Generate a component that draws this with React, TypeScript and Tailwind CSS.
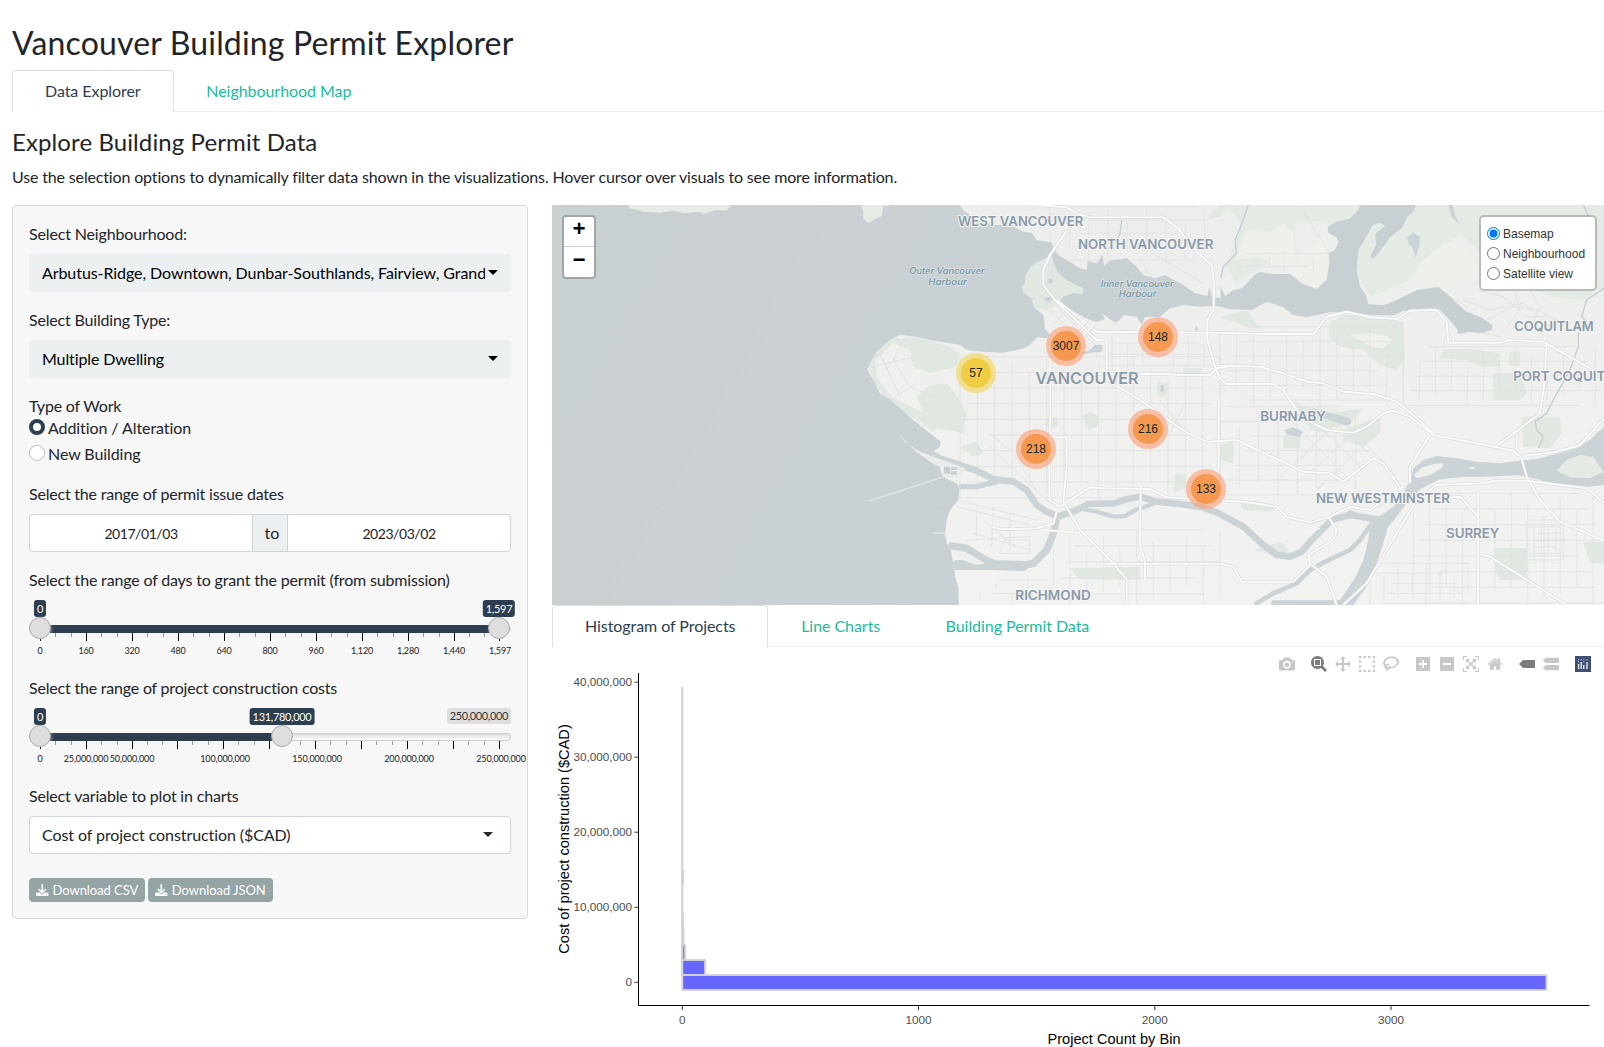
import React from "react";
import { FaDownload } from "react-icons/fa6";

const lato = "font-['Lato',sans-serif]";

function Caret({ className = "" }: { className?: string }) {
  return (
    <span
      className={`h-0 w-0 shrink-0 border-x-[5px] border-t-[5px] border-x-transparent border-t-current ${className}`}
    />
  );
}

function Tabs({ items }: { items: string[] }) {
  return (
    <div className="flex h-[42px] border-b border-[#ecf0f1]">
      {items.map((t, i) => (
        <div
          key={t}
          className={
            i === 0
              ? "h-[42px] rounded-t border border-b-0 border-[#dee2e6] bg-white px-8 py-2 leading-6 tracking-[-0.06px] text-[#2c3e50]"
              : "h-[42px] px-[32.7px] py-[9px] leading-6 tracking-[-0.05px] text-[#18bc9c]"
          }
        >
          {t}
        </div>
      ))}
    </div>
  );
}

function Bubble({ x, children, muted = false }: { x: number; children: React.ReactNode; muted?: boolean }) {
  return (
    <span
      className={
        muted
          ? "absolute top-0 right-0 h-4 rounded-[3px] bg-[#dedede] px-[3px] text-[11px] leading-[15px] tracking-[-0.37px] text-[#333]"
          : "absolute top-0 h-[17px] -translate-x-1/2 rounded-[3px] bg-[#2c3e50] px-[3px] text-[11px] leading-[17px] tracking-[-0.33px] text-white"
      }
      style={muted ? undefined : { left: x }}
    >
      {children}
    </span>
  );
}

function Handle({ x }: { x: number }) {
  return (
    <span
      className="absolute top-[17px] h-[22px] w-[22px] -translate-x-1/2 rounded-full border border-[#ababab] bg-[#dedede] shadow-[1px_1px_3px_rgba(255,255,255,0.3)]"
      style={{ left: x }}
    />
  );
}

type SliderProps = {
  to: number;
  toLabel: string;
  maxLabel?: string;
  majors: number[];
  labels: [number, string][];
};

function Slider({ to, toLabel, maxLabel, majors, labels }: SliderProps) {
  const minors: number[] = [];
  majors.slice(0, -1).forEach((m, i) => {
    const d = (majors[i + 1] - m) / 3;
    minors.push(m + d, m + 2 * d);
  });
  return (
    <div className="relative mt-2 mb-4 h-[60px]">
      <div className="absolute top-[25px] h-2 w-full rounded-lg border border-[#ccc] bg-gradient-to-b from-[#dedede] to-white" />
      <div className="absolute top-[25px] left-[11px] h-2 bg-[#2c3e50]" style={{ width: to - 11 }} />
      {minors.map((m) => (
        <span key={m} className="absolute top-[33px] h-1 w-px bg-[#999]" style={{ left: Math.round(m) }} />
      ))}
      {majors.map((m) => (
        <span key={m} className="absolute top-[33px] h-2 w-px bg-black" style={{ left: Math.round(m) }} />
      ))}
      {labels.map(([x, t]) => (
        <span
          key={t}
          className="absolute top-[44px] -translate-x-1/2 text-[9px] leading-[13px] tracking-[-0.14px] whitespace-nowrap text-[#222]"
          style={{ left: x }}
        >
          {t}
        </span>
      ))}
      {maxLabel && <Bubble x={0} muted>{maxLabel}</Bubble>}
      <Bubble x={11}>0</Bubble>
      <Bubble x={to}>{toLabel}</Bubble>
      <Handle x={11} />
      <Handle x={to} />
    </div>
  );
}

const dayMajors = [11, 57, 103, 149, 195, 241, 287, 333, 379, 425, 470];
const costMajors = [11, 57, 103, 148, 194, 240, 286, 332, 378, 424, 470];

function Sidebar() {
  return (
    <div className="h-[714px] w-[516px] shrink-0 rounded border border-[#d8d9da] bg-[#f7f7f7] p-4">
      <div className="leading-6 tracking-[-0.15px]">Select Neighbourhood:</div>
      <div className="mt-2 flex h-[38px] items-center rounded bg-[#ecf0f1] px-[13px] text-black">
        <span className="w-[443px] shrink-0 overflow-hidden tracking-[-0.07px] whitespace-nowrap">
          Arbutus-Ridge, Downtown, Dunbar-Southlands, Fairview, Grandview-Woodland
        </span>
        <Caret className="mb-0.5 ml-[3px]" />
      </div>
      <div className="mt-4 leading-6 tracking-[-0.18px]">Select Building Type:</div>
      <div className="mt-2 flex h-[38px] items-center rounded bg-[#ecf0f1] px-[13px] text-black">
        <span className="w-[443px] shrink-0 tracking-[-0.12px]">Multiple Dwelling</span>
        <Caret className="mb-0.5 ml-[3px]" />
      </div>
      <div className="mt-4 leading-6 tracking-[-0.2px]">Type of Work</div>
      <div className="-mt-0.5 flex h-[22px] items-center gap-[3px] pt-px">
        <span className="mb-px h-4 w-4 rounded-full border-[4.5px] border-[#2c3e50] bg-white" />
        <span className="leading-5 tracking-[-0.08px]">Addition / Alteration</span>
      </div>
      <div className="mt-1 mb-[18px] flex h-[22px] items-center gap-[3px] pt-px">
        <span className="mb-px h-4 w-4 rounded-full border border-[#bfbfbf] bg-white" />
        <span className="leading-5 tracking-[-0.08px]">New Building</span>
      </div>
      <div className="leading-6 tracking-[-0.21px]">Select the range of permit issue dates</div>
      <div className="mt-2 flex h-[38px] rounded border border-[#ced4da] bg-white text-[14px]">
        <div className="flex flex-1 items-center justify-center pt-px tracking-[-0.45px]">2017/01/03</div>
        <div className="flex w-9 items-center justify-center border-x border-[#ced4da] bg-[#ecf0f1] pl-1 text-base">to</div>
        <div className="flex flex-1 items-center justify-center pt-px tracking-[-0.45px]">2023/03/02</div>
      </div>
      <div className="mt-4 leading-6 tracking-[-0.17px]">Select the range of days to grant the permit (from submission)</div>
      <Slider
        to={470}
        toLabel="1,597"
        majors={dayMajors}
        labels={["0", "160", "320", "480", "640", "800", "960", "1,120", "1,280", "1,440", "1,597"].map(
          (t, i) => [dayMajors[i] + (i === 10 ? 1 : 0), t] as [number, string],
        )}
      />
      <div className="leading-6 tracking-[-0.2px]">Select the range of project construction costs</div>
      <Slider
        to={253}
        toLabel="131,780,000"
        maxLabel="250,000,000"
        majors={costMajors}
        labels={[
          [11, "0"],
          [57, "25,000,000"],
          [103, "50,000,000"],
          [196, "100,000,000"],
          [288, "150,000,000"],
          [380, "200,000,000"],
          [472, "250,000,000"],
        ]}
      />
      <div className="leading-6 tracking-[-0.18px]">Select variable to plot in charts</div>
      <div className="mt-2 flex h-[38px] items-center justify-between rounded border border-[#ced4da] bg-white pr-[17px] pl-3">
        <span className="tracking-[-0.08px]">Cost of project construction ($CAD)</span>
        <Caret className="mb-0.5" />
      </div>
      <div className="mt-6 flex gap-[3px] text-[13px] leading-6 text-white">
        {["Download CSV", "Download JSON"].map((t) => (
          <div key={t} className="flex h-6 items-center gap-1 rounded bg-[#95a5a6] px-[7px]">
            <FaDownload className="h-[12.5px] w-[12.5px]" />
            <span className="-mt-px tracking-[-0.05px]">{t}</span>
          </div>
        ))}
      </div>
    </div>
  );
}

/* Street grids: [x0, y0, x1, y1, horizontal step, vertical step] in map units */
const grids: [number, number, number, number, number, number][] = [
  [330, 470, 1110, 900, 52, 47],
  [740, 395, 1110, 520, 46, 34],
  [1110, 380, 1660, 620, 50, 44],
  [1110, 620, 1560, 900, 58, 44],
  [1660, 440, 2262, 620, 48, 44],
  [610, 990, 1110, 1215, 50, 48],
  [390, 1140, 620, 1215, 48, 40],
  [1690, 880, 2262, 1215, 49, 47],
  [1560, 1090, 1860, 1215, 42, 30],
  [2030, 960, 2150, 1080, 22, 20],
  [600, 20, 1070, 190, 58, 40],
  [1170, 160, 1440, 215, 44, 40],
];

function gridPath() {
  let d = "";
  grids.forEach(([x0, y0, x1, y1, sx, sy], g) => {
    let k = g * 7;
    for (let x = x0; x <= x1; x += sx) {
      const a = ((k * 37) % 5) * sy * 0.35;
      const b = ((k * 53) % 4) * sy * 0.4;
      d += `M${x} ${y0 + a}V${y1 - b}`;
      k++;
    }
    for (let y = y0; y <= y1; y += sy) {
      const a = ((k * 29) % 5) * sx * 0.4;
      const b = ((k * 43) % 4) * sx * 0.5;
      d += `M${x0 + a} ${y}H${x1 - b}`;
      k++;
    }
  });
  return d;
}

const roads = [
  "M560 15L650 22L680 40L720 52L940 52L985 85L1010 120L1045 160L1085 195L1093 260L1090 330L1072 360L1072 420L1095 500L1110 535L1130 552L1270 552L1300 570L1345 640",
  "M1318 600L1360 655L1430 690L1510 698L1550 680L1600 640L1630 632L1680 650L1750 705L1880 730L1990 752L2015 775L2030 830L2070 900L2130 965L2262 1022",
  "M1110 497L1230 500L1300 520L1370 545L1420 550L1480 575L1570 582L1640 605L1690 645L1750 700",
  "M648 95L600 165L580 210L580 255L615 300L740 420L760 420",
  "M620 300L740 395L1110 398L1240 402L1390 402L1430 350L1490 335L1560 352L1640 357L1680 332L1760 330L1790 365L1795 428L1955 428L1975 420L2080 425L2220 505",
  "M2090 430L2082 560L2070 640L1940 738",
  "M601 480V710M598 710V900L630 920L720 862L760 865L900 867L950 892L1180 905L1280 920L1310 950L1380 968L1440 950L1500 920L1560 930L1660 860",
  "M650 712V800L640 905L690 990L790 1090L830 1140V1215",
  "M600 712H650",
  "M872 858L870 1030L885 1085V1140",
  "M760 1091H1110L1150 1100L1175 1145L1330 1145L1380 1095L1375 1065L1450 1020L1460 990L1435 950",
  "M1385 1095L1430 1130L1460 1215",
  "M1480 1215L1550 1150L1700 900L1760 855L1900 850L1930 842L2030 842L2210 865L2262 910",
  "M770 420V540L870 600L1010 698L1070 725L1160 720L1360 815L1440 820L1480 845L1570 775L1600 790L1655 870",
  "M710 523L960 522M980 525L1080 524L1100 505L1140 498M1106 600V810",
  "M425 980L450 988L560 985L610 970L620 935M580 990L690 998",
  "M1885 870L1884 1215M1900 1065L1920 1070L2150 1215M1800 892L1830 890L1885 950",
  "M1740 705L1680 800L1680 850M2000 690L2000 745M2262 655L2190 735L2120 755L2020 768",
];

function MapLabel({
  x, y, w, size = 39, children,
}: { x: number; y: number; w: number; size?: number; children: string }) {
  return (
    <text
      x={x}
      y={y}
      textLength={w}
      lengthAdjust="spacingAndGlyphs"
      fontSize={size}
      fontWeight={600}
      fill="#8b9aa9"
      stroke="#f3f4f3"
      strokeWidth={6}
      strokeLinejoin="round"
      paintOrder="stroke"
      fontFamily="Inter, 'Open Sans', sans-serif"
    >
      {children}
    </text>
  );
}

function MapDrawing() {
  const water = "#ccd3d6";
  const park = "#e0e8e1";
  return (
    <svg className="block h-full w-full" viewBox="552 205 1052 400" preserveAspectRatio="xMidYMid slice">
      <defs>
        <linearGradient id="sea" x1="0" y1="0" x2="1" y2="0.25">
          <stop offset="0" stopColor="#c8d1d3" />
          <stop offset="0.25" stopColor="#cacfd2" />
          <stop offset="0.4" stopColor="#cad1d4" />
          <stop offset="1" stopColor="#c8cfd3" />
        </linearGradient>
        <linearGradient id="land" x1="0" y1="0" x2="0" y2="1">
          <stop offset="0" stopColor="#eceeeb" />
          <stop offset="0.4" stopColor="#eff0ed" />
          <stop offset="1" stopColor="#f2f3f0" />
        </linearGradient>
      </defs>
      <g transform="translate(850 200) scale(0.33333)">
        <rect x={-900} y={0} width={3200} height={1230} fill="url(#land)" />
        {/* mountains and parks */}
        <path fill="#e4eae4" d="M1120 15H2262V260L2200 300L2100 290L1980 240L1900 170L1830 100L1720 190L1660 250L1560 290L1500 180L1430 60L1330 70L1340 160L1250 190L1160 250L1130 200L1180 70Z" />
        <path fill="#eff0ec" d="M1190 90L1260 95L1300 70L1330 100L1340 180L1440 100L1430 230L1400 262L1340 225L1280 195L1220 170L1150 180Z" />
        <path fill="#eff0ec" d="M1780 130L1830 120L1860 160L1890 195L1860 230L1800 260L1720 260L1690 240L1710 190Z" />
        <path fill={park} d="M1440 370L1480 345L1560 350L1660 365L1665 480L1640 510L1590 495L1540 450L1470 440L1435 410Z" />
        <path fill="#f0f1ed" d="M1500 405L1560 400L1600 405L1630 420L1600 445L1560 440L1540 425Z" />
        <path fill={park} d="M110 420L200 410L300 440L330 460L320 500L240 520L190 500L180 450Z" />
        <path fill={park} d="M55 500L75 460L120 420L150 410L75 480L80 530L125 590L220 640L260 700L200 660L120 615L70 540Z" />
        <path fill={park} d="M200 590L240 555L290 550L330 600L350 640L340 700L300 690L220 680L215 620Z" />
        <path fill={park} d="M1930 520L2010 520L2030 580L2010 600L1930 600ZM1980 455L2010 455V500L1975 495ZM1780 450L1850 445L1950 460V500L1900 500L1850 480L1770 475Z" />
        <path fill={park} d="M2015 650L2130 650L2135 700L2100 745L2020 740ZM1935 1045L2030 1045V1140L1950 1140L1935 1110ZM2200 1025H2262V1090L2220 1090Z" />
        <path fill={park} d="M1480 690L1590 650L1590 700L1540 740L1480 720ZM1360 615L1430 640L1540 625L1500 670L1430 685L1380 660ZM1110 735L1150 725L1150 790L1110 780ZM1300 710H1350V745H1300Z" />
        <path fill={park} d="M1110 350L1190 330L1220 370L1240 385L1200 385ZM660 1105L870 1100V1140L690 1138ZM1330 600L1390 640L1430 700L1380 690ZM1210 1050L1290 1025L1320 1050L1290 1070Z" />
        <path fill={park} d="M695 650L720 635L750 650L740 680L715 690ZM975 820L1005 825L1010 860L970 880ZM590 650L625 655L620 680L585 680ZM1000 505H1060L1050 530H1000ZM920 545L955 550L950 590H925Z" />
        <path fill={park} d="M1070 60L1110 50L1140 15H1110L1080 45ZM330 740L380 725L400 760L370 770ZM1170 910L1280 922L1270 935L1180 930Z" />

        <path d={gridPath()} fill="none" stroke="#e0e1e2" strokeWidth={2.4} />
        <path
          d="M1340 610L1540 810M1380 600L1600 800M1300 640L1500 840M1440 620L1640 830M1290 830L1500 630M1340 850L1560 660M1400 870L1600 680M1350 780L1470 660M90 460L150 590M160 420L130 480L180 560L250 590M70 500L190 470M120 600L200 550M930 600L1000 690M1000 620L960 700M870 180L910 240M840 120L1060 250M1180 15L1170 100L1130 200M1350 20L1440 160M1840 300L1920 330L2020 310L2100 380M1880 270L1960 290L2030 350L2090 350M1910 360L1990 320L2060 330L2140 370M1990 260L2010 330L1970 380M1800 290L1850 320L1900 400L1950 410M2040 270L2070 320L2050 370L2080 410M420 700L490 760L560 870M420 740L600 910"
          fill="none" stroke="#dedfe0" strokeWidth={2.4}
        />
        {/* airport */}
        <path
          d="M320 900L560 960M320 920L540 975M350 1020L540 1010M380 930V1010M430 920L425 1040M480 940V1050M400 960L500 1045M370 1000L540 1050M460 1020H540V1060H450Z"
          fill="none" stroke="#dddfdf" strokeWidth={2.4}
        />

        {/* sea and inlet */}
        <path
          fill="url(#sea)"
          d="M-900 0H315L345 35L380 60L430 75L480 75L520 95L545 98L560 120L605 128L612 148L625 165L650 180L690 205L710 210L713 183L740 190L758 165L762 198L780 182L830 175L860 200L880 225L915 235L945 225L1000 255L1035 280L1072 288L1078 262L1085 290L1112 295V258L1125 288L1150 270L1175 265L1200 240L1212 225L1230 216L1270 222L1320 222L1355 250L1400 267L1430 240L1438 190L1436 160L1455 150L1465 125L1460 112L1435 98L1433 80L1460 65L1500 55L1525 30L1535 0H1705L1690 35L1672 50L1655 85L1620 112L1600 140L1570 176L1560 172L1578 135L1577 100L1605 78L1590 68L1568 75L1555 100L1525 150L1520 210L1530 260L1548 285L1555 312L1600 316L1640 300L1680 280L1700 270L1765 261L1790 280L1820 310L1850 335L1890 350L1928 375L1925 390L1890 400L1860 395L1825 402L1820 385L1790 350L1770 330L1740 325L1660 332L1630 346L1560 345L1500 335L1440 337L1370 352L1330 345L1300 322L1250 305L1205 330L1140 328L1100 318L1050 320L1000 315L960 325L930 350L885 352L875 375L860 350L820 345L810 360L795 368L755 340L765 358L740 366L720 360L690 345L665 330L640 315L615 305L580 295L545 300L555 325L580 345L585 385L600 405L590 415L562 412L540 435L520 445L500 450L460 458L400 455L350 450L330 435L300 430L250 422L200 410L150 405L120 420L80 455L60 490L52 510L70 540L90 580L120 600L150 625L190 660L215 680L240 700L272 725L270 740L248 755L260 775L320 790L270 795L278 830L320 850L328 865L325 900L300 930L290 960L285 1000L290 1030L300 1040L312 1100L315 1130L325 1160L327 1230H-900Z"
        />
        <path fill={water} d="M690 460L720 450L735 435L758 435L755 455L725 458L705 462ZM1672 110L1690 98L1710 110L1708 140L1697 172L1688 145L1675 130ZM1795 15H1808L1815 45L1830 75L1805 50ZM1390 625L1500 655L1505 670L1490 678L1440 660L1400 645ZM1305 690L1330 682L1358 695L1350 710L1310 705ZM932 555H942V575H932ZM1035 380H1043V392H1035Z" />
        {/* distant islands */}
        <path fill="#e6ebe5" d="M-670 10L-660 25L-620 35L-570 38L-530 32L-500 40L-450 35L-440 42L-400 30L-370 32L-355 10ZM32 10L40 35L40 55L55 70L70 60L95 48L100 15ZM102 15L110 20L120 15Z" />
        {/* Stanley Park peninsula */}
        <path fill={park} d="M605 165L612 190L625 218L650 240L700 265L698 283L668 280L640 290L625 312L590 332L560 325L548 298L520 278L515 260L525 250L527 225L545 195L580 178Z" />
        <ellipse cx={602} cy={243} rx={7} ry={8} fill={water} />
        <path fill={water} d="M578 295L600 290L610 298L595 308Z" />

        {/* river arms */}
        <g fill="none" stroke={water} strokeLinejoin="round" strokeLinecap="round">
          <path strokeWidth={20} d="M235 755L270 775L330 795L380 812L430 838L490 845L530 870L560 915L590 935L625 950L680 930L715 912L790 910L830 898L870 890L920 905L990 912L1060 922L1110 942L1180 980L1240 1035L1280 1065L1320 1070L1355 1055L1385 1020L1420 985L1450 958L1500 945L1560 955L1600 960" />
          <path strokeWidth={13} d="M690 925L740 935L790 950L825 948L860 928L910 912" />
          <path strokeWidth={16} d="M335 860L380 860L440 845" />
          <path strokeWidth={22} d="M620 955L610 1000L590 1050L550 1090L500 1100L440 1095L390 1070L350 1045L305 1038" />
          <path strokeWidth={30} d="M320 1095L420 1095L520 1098" />
          <path strokeWidth={14} d="M1565 970L1530 1020L1500 1050L1420 1088L1380 1110L1340 1150L1270 1180L1220 1210M1270 1208H1470" />
          <path strokeWidth={9} d="M1470 955L1500 935L1540 950" />
        </g>
        <path
          fill={water}
          d="M2262 680L2220 720L2180 745L2140 755L2060 777L2000 783L1950 790L1880 785L1820 775L1760 768L1720 780L1690 805L1680 840L1660 880L1630 920L1580 955L1560 985L1553 1030L1540 1080L1515 1135L1460 1215H1510L1550 1160L1580 1090L1600 1030L1612 985L1640 950L1670 910L1710 868L1770 838L1830 832L1910 830L2010 826L2070 840L2150 858L2200 862L2262 855Z"
        />
        <path fill="#e5eae5" d="M2120 812L2150 780L2190 765L2230 770L2260 815L2220 835L2160 832Z" />
        <path fill="#f0f1ee" d="M1692 825L1715 803L1750 792L1780 790L1775 805L1740 825L1700 835ZM1850 803L1875 801L1870 808Z" />
        <path fill="#eff0ed" d="M705 922L790 922L850 905L885 905L840 930L790 940L740 925ZM308 1050L350 1058L405 1090L380 1095L330 1078Z" />
        {/* sand bars and jetty */}
        <path fill="#e9ecea" d="M137 692L165 725L210 755L255 772L300 788L345 805L330 835L280 832L268 800L240 785L195 752Z" />
        <path fill="none" stroke="#e0e4e3" strokeWidth={4} d="M57 903L275 832M250 997L290 1002" />
        <path fill="#c5ced0" d="M282 800H300V822L282 820ZM303 802H322V810H303ZM303 814H320V824H303Z" />
        <path fill="none" stroke="#c3ced2" strokeWidth={4} d="M1195 15L1180 60L1155 120L1160 160L1120 200L1112 235M2200 15L2225 70M2262 265L2210 300L2195 350L2208 365L2185 400L2185 440L2160 510L2110 600M2110 600L2090 640L2055 665L2060 690L2080 710L2065 745M815 60L810 100L800 120" />

        {/* highways */}
        {roads.map((d) => (
          <path key={d} d={d} fill="none" stroke="#d8dada" strokeWidth={9.5} strokeLinejoin="round" />
        ))}
        {roads.map((d) => (
          <path key={d} d={d} fill="none" stroke="#fafafa" strokeWidth={6} strokeLinejoin="round" />
        ))}
        <path fill="none" stroke="#dcdede" strokeWidth={2.5} d="M600 330L720 450M620 320L735 435M590 350L610 330M615 370L640 345M680 400L715 365M700 415L735 380" />
        <path fill="none" stroke="#f8f8f8" strokeWidth={3} d="M690 395L720 365M700 405L730 375M680 385L710 355M1360 1000L1410 985" />

        <MapLabel x={324} y={78} w={376}>WEST VANCOUVER</MapLabel>
        <MapLabel x={684} y={148} w={406}>NORTH VANCOUVER</MapLabel>
        <MapLabel x={556} y={551} w={310} size={48}>VANCOUVER</MapLabel>
        <MapLabel x={1993} y={394} w={238}>COQUITLAM</MapLabel>
        <MapLabel x={1990} y={542} w={364}>PORT COQUITLAM</MapLabel>
        <MapLabel x={1231} y={664} w={196}>BURNABY</MapLabel>
        <MapLabel x={1398} y={910} w={402}>NEW WESTMINSTER</MapLabel>
        <MapLabel x={1788} y={1014} w={160}>SURREY</MapLabel>
        <MapLabel x={496} y={1201} w={226}>RICHMOND</MapLabel>
        <g
          fontFamily="Inter, 'Open Sans', sans-serif"
          fontStyle="italic"
          fontWeight={500}
          fontSize={26}
          fill="#7795a1"
          stroke="#dde2e4"
          strokeWidth={4}
          strokeLinejoin="round"
          paintOrder="stroke"
        >
          <text x={178} y={222} textLength={226} lengthAdjust="spacingAndGlyphs">Outer Vancouver</text>
          <text x={235} y={255} textLength={115} lengthAdjust="spacingAndGlyphs">Harbour</text>
          <text x={752} y={260} textLength={219} lengthAdjust="spacingAndGlyphs">Inner Vancouver</text>
          <text x={806} y={292} textLength={113} lengthAdjust="spacingAndGlyphs">Harbour</text>
        </g>
      </g>
    </svg>
  );
}

const clusters = [
  { n: 3007, x: 514, y: 141 },
  { n: 57, x: 424, y: 168 },
  { n: 148, x: 606, y: 132 },
  { n: 218, x: 484, y: 244 },
  { n: 216, x: 596, y: 224 },
  { n: 133, x: 654, y: 284 },
];

function MapPanel() {
  return (
    <div className="relative h-[400px] w-[1052px] overflow-hidden font-['Liberation_Sans',sans-serif] text-xs">
      <MapDrawing />
      {clusters.map((c) => (
        <div
          key={c.n}
          className={`absolute flex h-10 w-10 -translate-x-1/2 -translate-y-1/2 items-center justify-center rounded-full ${
            c.n < 100 ? "bg-[rgba(241,211,87,0.6)]" : "bg-[rgba(253,156,115,0.6)]"
          }`}
          style={{ left: c.x, top: c.y }}
        >
          <div
            className={`flex h-[30px] w-[30px] items-center justify-center rounded-full ${
              c.n < 100 ? "bg-[rgba(240,194,12,0.6)]" : "bg-[rgba(241,128,23,0.6)]"
            }`}
          >
            {c.n}
          </div>
        </div>
      ))}
      <div className="absolute top-[10px] left-[10px] h-16 w-[34px] rounded border-2 border-black/20 bg-white bg-clip-padding text-center font-['Liberation_Mono',monospace] text-[22px] font-bold text-black">
        <div className="h-[30px] border-b border-[#ccc] leading-[28px]">+</div>
        <div className="h-[30px] leading-[29px]">−</div>
      </div>
      <div className="absolute top-[10px] left-[927px] flex h-[76px] w-[118px] flex-col rounded-[5px] border-2 border-black/20 bg-white bg-clip-padding pt-[7px] pl-1.5 text-[#333]">
        {["Basemap", "Neighbourhood", "Satellite view"].map((t, i) => (
          <label key={t} className="flex h-5 items-center">
            <input type="radio" name="layer" defaultChecked={i === 0} className="mb-0.5 h-[13px] w-[13px]" />
            <span className="ml-[3px] leading-4">{t}</span>
          </label>
        ))}
      </div>
    </div>
  );
}

const icons: { w: number; dx: number; dark?: boolean; d: string }[] = [
  { w: 1000, dx: 0, d: "m500 450c-83 0-150-67-150-150 0-83 67-150 150-150 83 0 150 67 150 150 0 83-67 150-150 150z m400 150h-120c-16 0-34 13-39 29l-31 93c-6 15-23 28-40 28h-340c-16 0-34-13-39-28l-31-94c-6-15-23-28-40-28h-120c-55 0-100-45-100-100v-450c0-55 45-100 100-100h800c55 0 100 45 100 100v450c0 55-45 100-100 100z m-400-550c-138 0-250 112-250 250 0 138 112 250 250 250 138 0 250-112 250-250 0-138-112-250-250-250z m365 380c-19 0-35 16-35 35 0 19 16 35 35 35 19 0 35-16 35-35 0-19-16-35-35-35z" },
  { w: 1000, dx: 16, dark: true, d: "m1000-25l-250 251c40 63 63 138 63 218 0 224-182 406-407 406-224 0-406-182-406-406s183-406 407-406c80 0 155 22 218 62l250-250 125 125z m-812 250l0 438 437 0 0-438-437 0z m62 375l313 0 0-312-313 0 0 312z" },
  { w: 1000, dx: 8, d: "m1000 350l-187 188 0-125-250 0 0 250 125 0-188 187-187-187 125 0 0-250-250 0 0 125-188-188 186-187 0 125 252 0 0-250-125 0 187-188 188 188-125 0 0 250 250 0 0-126 187 188z" },
  { w: 1000, dx: 8, d: "m0 850l0-143 143 0 0 143-143 0z m286 0l0-143 143 0 0 143-143 0z m285 0l0-143 143 0 0 143-143 0z m286 0l0-143 143 0 0 143-143 0z m-857-286l0-143 143 0 0 143-143 0z m857 0l0-143 143 0 0 143-143 0z m-857-285l0-143 143 0 0 143-143 0z m857 0l0-143 143 0 0 143-143 0z m-857-286l0-143 143 0 0 143-143 0z m286 0l0-143 143 0 0 143-143 0z m285 0l0-143 143 0 0 143-143 0z m286 0l0-143 143 0 0 143-143 0z" },
  { w: 1031, dx: 8, d: "m1018 538c-36 207-290 336-568 286-277-48-473-256-436-463 10-57 36-108 76-151-13-66 11-137 68-183 34-28 75-41 114-42l-55-70 0 0c-2-1-3-2-4-3-10-14-8-34 5-45 14-11 34-8 45 4 1 1 2 3 2 5l0 0 113 140c16 11 31 24 45 40 4 3 6 7 8 11 48-3 100 0 151 9 278 48 473 255 436 462z m-624-379c-80 14-149 48-197 96 42 42 109 47 156 9 33-26 47-66 41-105z m-187-74c-19 16-33 37-39 60 50-32 109-55 174-68-42-25-95-24-135 8z m360 75c-34-7-69-9-102-8 8 62-16 128-68 170-73 59-175 54-244-5-9 20-16 40-20 61-28 159 121 317 333 354s407-60 434-217c28-159-121-318-333-355z" },
  { w: 875, dx: 8, d: "m1 787l0-875 875 0 0 875-875 0z m687-500l-187 0 0-187-125 0 0 187-188 0 0 125 188 0 0 187 125 0 0-187 187 0 0-125z" },
  { w: 875, dx: 8, d: "m0 788l0-876 876 0 0 876-876 0z m688-500l-500 0 0 125 500 0 0-125z" },
  { w: 1000, dx: 8, d: "m250 850l-187 0-63 0 0-62 0-188 63 0 0 188 187 0 0 62z m688 0l-188 0 0-62 188 0 0-188 62 0 0 188 0 62-62 0z m-875-938l0 188-63 0 0-188 0-62 63 0 187 0 0 62-187 0z m875 188l0-188-188 0 0-62 188 0 62 0 0 62 0 188-62 0z m-125 188l-1 0-93-94-156 156 156 156 92-93 2 0 0 250-250 0 0-2 93-92-156-156-156 156 94 92 0 2-250 0 0-250 0 0 93 93 157-156-157-156-93 94 0 0 0-250 250 0 0 0-94 93 156 157 156-157-93-93 0 0 250 0 0 250z" },
  { w: 928.6, dx: 8, d: "m786 296v-267q0-15-11-26t-25-10h-214v214h-143v-214h-214q-15 0-25 10t-11 26v267q0 1 0 2t0 2l321 264 321-264q1-1 1-4z m124 39l-34-41q-5-5-12-6h-2q-7 0-12 3l-386 322-386-322q-7-4-13-4-7 2-12 7l-35 41q-4 5-3 13t6 12l401 334q18 15 42 15t43-15l136-114v109q0 8 5 13t13 5h107q8 0 13-5t5-13v-227l122-102q5-5 6-12t-4-13z" },
  { w: 1500, dx: 16, dark: true, d: "m375 725l0 0-375-375 375-374 0-1 1125 0 0 750-1125 0z" },
  { w: 1125, dx: 8, d: "m187 786l0 2-187-188 188-187 0 0 937 0 0 373-938 0z m0-499l0 1-187-188 188-188 0 0 937 0 0 376-938-1z" },
];

function Modebar() {
  return (
    <div className="absolute top-[9px] left-[727px] flex h-4">
      {icons.map((ic, i) => (
        <svg
          key={i}
          className={`h-4 w-4 ${ic.dark ? "fill-[#7c7c7c]" : "fill-[#c7c7c7]"}`}
          style={{ marginLeft: i === 5 ? 16 : ic.dx }}
          viewBox={`0 0 ${ic.w} 1000`}
        >
          <path transform="matrix(1 0 0 -1 0 850)" d={ic.d} />
        </svg>
      ))}
      <svg className="ml-4 h-4 w-4" viewBox="0 0 16 16">
        <rect width={16} height={16} fill="#3f4f75" />
        <path fill="#fff" d="M3 8h1.2v5H3zM5.6 6h1.2v7H5.6zM8.2 9h1.2v4H8.2zM11.4 6h1.2v7h-1.2z" />
        <path fill="#80cfbe" d="M3 3h1.2v1.2H3zM3 5.3h1.2v1.2H3zM5.6 3h1.2v1.2H5.6zM8.2 3h1.2v1.2H8.2zM8.2 5.3h1.2v1.2H8.2zM11.4 3h1.2v1.2h-1.2z" />
      </svg>
    </div>
  );
}

function Chart() {
  return (
    <div className="relative h-[400px] w-[1052px] overflow-hidden">
      <svg className="block h-full w-full" viewBox="552 647 1052 400" fontFamily="'Liberation Sans', sans-serif">
        {/* slender bins near zero */}
        <path d="M682.2 687V975" stroke="#d6d6d6" strokeWidth={2.4} />
        <path d="M683 870V885M683 913V945M683.6 928V945" stroke="#d3d3d3" strokeWidth={1.8} />
        <g fill="#6666ff" stroke="#d3d3d3" strokeWidth={1.9}>
          <rect x={682.3} y={945} width={2.8} height={15} />
          <rect x={682.3} y={960} width={22.8} height={15} />
          <rect x={682.3} y={975} width={864.2} height={15} />
        </g>
        <path d="M638.5 673V1005.5H1589.5" fill="none" stroke="#000" strokeWidth={1} />
        <path d="M634.5 682.2h4M634.5 757.2h4M634.5 832.2h4M634.5 907.3h4M634.5 982.3h4M682.3 1006v4M918.5 1006v4M1154.8 1006v4M1391 1006v4" stroke="#333" strokeWidth={1} />
        <g fontSize={11.7} fill="#4d4d4d" textAnchor="end">
          <text x={632} y={686}>40,000,000</text>
          <text x={632} y={761}>30,000,000</text>
          <text x={632} y={836}>20,000,000</text>
          <text x={632} y={911}>10,000,000</text>
          <text x={632} y={986}>0</text>
        </g>
        <g fontSize={11.7} fill="#4d4d4d" textAnchor="middle">
          <text x={682.3} y={1024}>0</text>
          <text x={918.5} y={1024}>1000</text>
          <text x={1154.8} y={1024}>2000</text>
          <text x={1391} y={1024}>3000</text>
        </g>
        <g fontSize={14.6} fill="#000" textAnchor="middle">
          <text x={1114} y={1044}>Project Count by Bin</text>
          <text transform="translate(569 839) rotate(-90)">Cost of project construction ($CAD)</text>
        </g>
      </svg>
      <Modebar />
    </div>
  );
}

export default function App() {
  return (
    <div className={`h-[1047px] w-[1604px] overflow-hidden bg-white pt-6 pl-3 text-base text-[#212529] ${lato}`}>
      <h1 className="mb-2 h-[38px] text-[32px] leading-[38px] tracking-[0.16px]">Vancouver Building Permit Explorer</h1>
      <Tabs items={["Data Explorer", "Neighbourhood Map"]} />
      <h2 className="mt-[15px] mb-[9px] h-[29px] text-2xl leading-[29px] tracking-[0.1px]">Explore Building Permit Data</h2>
      <p className="mb-4 leading-6 tracking-[-0.155px]">
        Use the selection options to dynamically filter data shown in the visualizations. Hover cursor over visuals to see
        more information.
      </p>
      <div className="flex items-start gap-6">
        <Sidebar />
        <main className="w-[1052px] shrink-0">
          <MapPanel />
          <Tabs items={["Histogram of Projects", "Line Charts", "Building Permit Data"]} />
          <Chart />
        </main>
      </div>
    </div>
  );
}
